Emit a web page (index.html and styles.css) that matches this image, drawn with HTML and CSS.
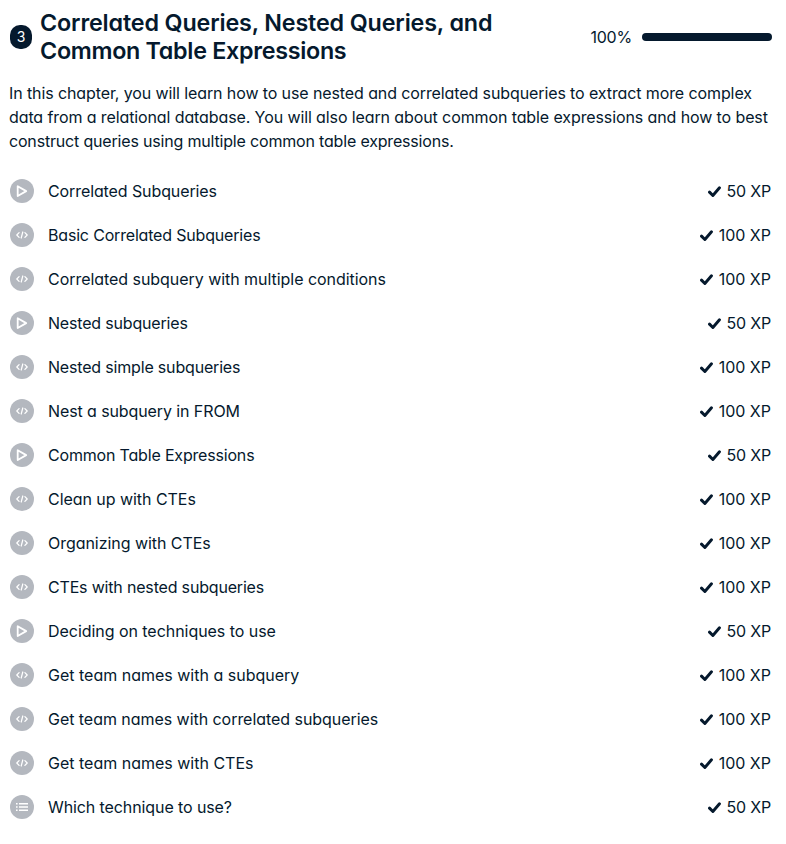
FILE: index.html
```html
<!DOCTYPE html>
<html lang="en">
<head>
<meta charset="utf-8">
<title>Correlated Queries, Nested Queries, and Common Table Expressions</title>
<link rel="stylesheet" href="styles.css">
</head>
<body>
<svg class="sprite" aria-hidden="true">
  <symbol id="play" viewBox="0 0 24 24"><path d="M7.7 7.2v9.8l8.5-4.9z" fill="none" stroke="#fff" stroke-width="1.8" stroke-linejoin="round"/></symbol>
  <symbol id="code" viewBox="0 0 24 24"><path d="M9.1 9.6L6.8 12l2.3 2.4M14.9 9.6l2.3 2.4-2.3 2.4M12.8 9l-1.6 6" fill="none" stroke="#fff" stroke-width="1.25" stroke-linecap="round" stroke-linejoin="round"/></symbol>
  <symbol id="list" viewBox="0 0 24 24"><path d="M6 8.7h1.6M6 12h1.6M6 15.3h1.6M9 8.7h9M9 12h9M9 15.3h9" fill="none" stroke="#fff" stroke-width="1.5"/></symbol>
  <symbol id="check" viewBox="0 0 12 12"><path d="M1.4 6.6l3.1 3.1 6.1-7.1" fill="none" stroke="#05192d" stroke-width="2.7" stroke-linecap="round" stroke-linejoin="round"/></symbol>
</svg>
<section class="chapter">
  <header class="head">
    <span class="number">3</span>
    <h4 class="title">Correlated Queries, Nested Queries, and<br><span class="title-end">Common Table Expressions</span></h4>
    <div class="progress"><span class="percent">100%</span><div class="bar"></div></div>
  </header>
  <p class="desc">In this chapter, you will learn how to use nested and correlated subqueries to extract more complex<br>data from a relational database. You will also learn about common table expressions and how to best<br><span class="tight">construct queries using multiple common table expressions.</span></p>
  <ul class="list">
    <li><svg class="kind"><use href="#play"/></svg><span class="name snug">Correlated Subqueries</span><svg class="check"><use href="#check"/></svg><span class="fifty">50 XP</span></li>
    <li><svg class="kind"><use href="#code"/></svg><span class="name tight">Basic Correlated Subqueries</span><svg class="check"><use href="#check"/></svg><span>100 XP</span></li>
    <li><svg class="kind"><use href="#code"/></svg><span class="name">Correlated subquery with multiple conditions</span><svg class="check"><use href="#check"/></svg><span>100 XP</span></li>
    <li><svg class="kind"><use href="#play"/></svg><span class="name tight">Nested subqueries</span><svg class="check"><use href="#check"/></svg><span class="fifty">50 XP</span></li>
    <li><svg class="kind"><use href="#code"/></svg><span class="name tight">Nested simple subqueries</span><svg class="check"><use href="#check"/></svg><span>100 XP</span></li>
    <li><svg class="kind"><use href="#code"/></svg><span class="name snug">Nest a subquery in FROM</span><svg class="check"><use href="#check"/></svg><span>100 XP</span></li>
    <li><svg class="kind"><use href="#play"/></svg><span class="name tight">Common Table Expressions</span><svg class="check"><use href="#check"/></svg><span class="fifty">50 XP</span></li>
    <li><svg class="kind"><use href="#code"/></svg><span class="name">Clean up with CTEs</span><svg class="check"><use href="#check"/></svg><span>100 XP</span></li>
    <li><svg class="kind"><use href="#code"/></svg><span class="name">Organizing with CTEs</span><svg class="check"><use href="#check"/></svg><span>100 XP</span></li>
    <li><svg class="kind"><use href="#code"/></svg><span class="name tight">CTEs with nested subqueries</span><svg class="check"><use href="#check"/></svg><span>100 XP</span></li>
    <li><svg class="kind"><use href="#play"/></svg><span class="name">Deciding on techniques to use</span><svg class="check"><use href="#check"/></svg><span class="fifty">50 XP</span></li>
    <li><svg class="kind"><use href="#code"/></svg><span class="name loose">Get team names with a subquery</span><svg class="check"><use href="#check"/></svg><span>100 XP</span></li>
    <li><svg class="kind"><use href="#code"/></svg><span class="name">Get team names with correlated subqueries</span><svg class="check"><use href="#check"/></svg><span>100 XP</span></li>
    <li><svg class="kind"><use href="#code"/></svg><span class="name loose">Get team names with CTEs</span><svg class="check"><use href="#check"/></svg><span>100 XP</span></li>
    <li><svg class="kind"><use href="#list"/></svg><span class="name snug">Which technique to use?</span><svg class="check"><use href="#check"/></svg><span class="fifty">50 XP</span></li>
  </ul>
</section>
</body>
</html>
```
FILE: styles.css
```css
* { box-sizing: border-box; }
body {
  margin: 0;
  background: #fff;
  color: #05192d;
  font: 16px/24px Inter, "Liberation Sans", sans-serif;
  font-feature-settings: "cv11";
}
.sprite { display: none; }
.chapter { padding: 9px 14px 0 10px; }
.head { display: flex; align-items: center; height: 56px; }
.number {
  width: 22px;
  height: 24px;
  margin-right: 8px;
  border-radius: 10px;
  background: #05192d;
  color: #fff;
  font-size: 14px;
  line-height: 23px;
  text-align: center;
}
.title {
  flex: 1;
  margin: 0;
  font-size: 23.3px;
  font-weight: 600;
  letter-spacing: -0.145px;
  line-height: 28px;
  white-space: nowrap;
}
.title-end { letter-spacing: -0.29px; }
.progress { display: flex; align-items: center; gap: 10px; }
.percent { letter-spacing: -0.2px; }
.bar { width: 130px; height: 8px; border-radius: 4px; background: #05192d; }
.desc {
  margin: 16px 0 0 -1px;
  letter-spacing: -0.105px;
  white-space: nowrap;
}
.list { margin: 16px 0 0; padding: 0; list-style: none; }
.list li { display: flex; align-items: center; height: 44px; padding-right: 1px; }
.kind { width: 24px; height: 24px; margin-right: 14px; border-radius: 50%; background: #b4b8bf; }
.name { flex: 1; letter-spacing: -0.045px; }
.loose { letter-spacing: 0; }
.snug { letter-spacing: -0.1px; }
.tight { letter-spacing: -0.18px; }
.fifty { letter-spacing: -0.2px; }
.check { width: 13px; height: 13px; margin-right: 6px; }
```
